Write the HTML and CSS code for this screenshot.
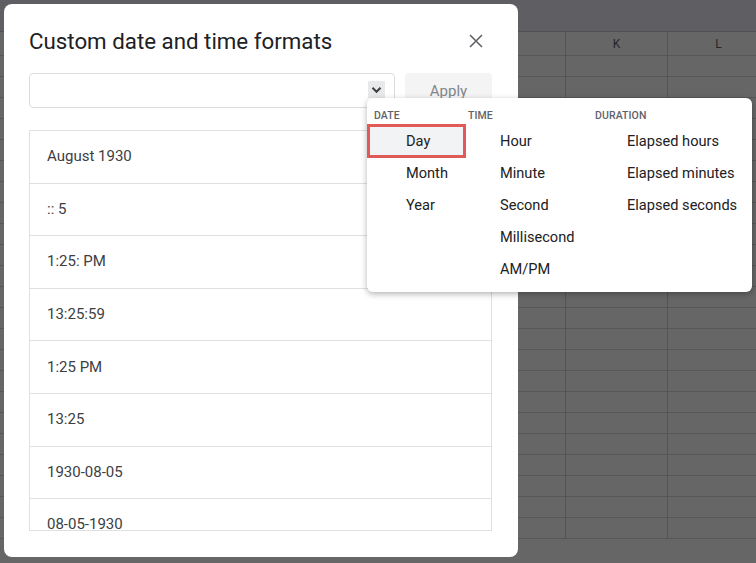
FILE: index.html
```html
<!DOCTYPE html>
<html>
<head>
<meta charset="utf-8">
<link rel="stylesheet" href="styles.css">
</head>
<body>
<div class="sheet">
  <div class="topbar"></div>
  <div class="grid">
    <div class="hcell"></div><div class="hcell">J</div><div class="hcell">K</div><div class="hcell">L</div>
    <div class="cell"></div><div class="cell"></div><div class="cell"></div><div class="cell"></div>
    <div class="cell"></div><div class="cell"></div><div class="cell"></div><div class="cell"></div>
    <div class="cell"></div><div class="cell"></div><div class="cell"></div><div class="cell"></div>
    <div class="cell"></div><div class="cell"></div><div class="cell"></div><div class="cell"></div>
    <div class="cell"></div><div class="cell"></div><div class="cell"></div><div class="cell"></div>
    <div class="cell"></div><div class="cell"></div><div class="cell"></div><div class="cell"></div>
    <div class="cell"></div><div class="cell"></div><div class="cell"></div><div class="cell"></div>
    <div class="cell"></div><div class="cell"></div><div class="cell"></div><div class="cell"></div>
    <div class="cell"></div><div class="cell"></div><div class="cell"></div><div class="cell"></div>
    <div class="cell"></div><div class="cell"></div><div class="cell"></div><div class="cell"></div>
    <div class="cell"></div><div class="cell"></div><div class="cell"></div><div class="cell"></div>
    <div class="cell"></div><div class="cell"></div><div class="cell"></div><div class="cell"></div>
    <div class="cell"></div><div class="cell"></div><div class="cell"></div><div class="cell"></div>
    <div class="cell"></div><div class="cell"></div><div class="cell"></div><div class="cell"></div>
    <div class="cell"></div><div class="cell"></div><div class="cell"></div><div class="cell"></div>
    <div class="cell"></div><div class="cell"></div><div class="cell"></div><div class="cell"></div>
    <div class="cell"></div><div class="cell"></div><div class="cell"></div><div class="cell"></div>
    <div class="cell"></div><div class="cell"></div><div class="cell"></div><div class="cell"></div>
    <div class="cell"></div><div class="cell"></div><div class="cell"></div><div class="cell"></div>
    <div class="cell"></div><div class="cell"></div><div class="cell"></div><div class="cell"></div>
    <div class="cell"></div><div class="cell"></div><div class="cell"></div><div class="cell"></div>
    <div class="cell"></div><div class="cell"></div><div class="cell"></div><div class="cell"></div>
    <div class="cell"></div><div class="cell"></div><div class="cell"></div><div class="cell"></div>
  </div>
</div>

<div class="dialog">
  <div class="title-row">
    <h1 class="title">Custom date and time formats</h1>
    <button class="close" aria-label="Close">
      <svg width="14" height="14" viewBox="0 0 14 14"><path d="M1 1L13 13M13 1L1 13" stroke="#5f6368" stroke-width="1.6" fill="none"/></svg>
    </button>
  </div>
  <div class="input-row">
    <div class="input">
      <span class="chev">
        <svg width="11" height="8" viewBox="0 0 11 8"><path d="M1.5 1.8L5.5 5.8L9.5 1.8" stroke="#3c4043" stroke-width="2" fill="none"/></svg>
      </span>
    </div>
    <button class="apply">Apply</button>
  </div>
  <div class="list">
    <div class="item">August 1930</div>
    <div class="item">:: 5</div>
    <div class="item">1:25: PM</div>
    <div class="item">13:25:59</div>
    <div class="item">1:25 PM</div>
    <div class="item">13:25</div>
    <div class="item">1930-08-05</div>
    <div class="item">08-05-1930</div>
  </div>
</div>

<div class="menu">
  <div class="mcol c1">
    <div class="mhead">Date</div>
    <div class="mitem selected">Day</div>
    <div class="mitem">Month</div>
    <div class="mitem">Year</div>
  </div>
  <div class="mcol c2">
    <div class="mhead">Time</div>
    <div class="mitem">Hour</div>
    <div class="mitem">Minute</div>
    <div class="mitem">Second</div>
    <div class="mitem">Millisecond</div>
    <div class="mitem">AM/PM</div>
  </div>
  <div class="mcol c3">
    <div class="mhead">Duration</div>
    <div class="mitem">Elapsed hours</div>
    <div class="mitem">Elapsed minutes</div>
    <div class="mitem">Elapsed seconds</div>
  </div>
</div>
</body>
</html>
```

FILE: styles.css
```css
html, body {
  margin: 0;
  padding: 0;
  width: 756px;
  height: 563px;
  overflow: hidden;
  font-family: Roboto, "Liberation Sans", Arial, sans-serif;
  background: #666666;
}

.sheet {
  width: 756px;
  height: 563px;
  display: flex;
  flex-direction: column;
  overflow: hidden;
}

.topbar {
  height: 32px;
  flex: none;
  background: #5f5f63;
  border-bottom: 1px solid #525252;
  box-sizing: border-box;
}

.grid {
  display: grid;
  grid-template-columns: 464px 102px 102px 102px;
  grid-auto-rows: 21px;
  grid-template-rows: 24px;
}

.hcell, .cell {
  box-sizing: border-box;
  border-right: 1px solid #545454;
  border-bottom: 1px solid #575757;
  background: #666666;
}

.hcell {
  font-size: 12px;
  color: #262626;
  display: flex;
  align-items: center;
  justify-content: center;
}

.dialog {
  position: absolute;
  left: 4px;
  top: 4px;
  width: 514px;
  height: 553px;
  box-sizing: border-box;
  background: #ffffff;
  border-radius: 8px;
  padding: 23px 26px 0 25px;
  display: flex;
  flex-direction: column;
}

.title-row {
  display: flex;
  align-items: center;
  justify-content: space-between;
  height: 28px;
}

.title {
  margin: 0;
  font-size: 22.3px;
  font-weight: 400;
  color: #202124;
  line-height: 28px;
}

.close {
  width: 24px;
  height: 24px;
  margin-right: 4px;
  padding: 0;
  border: none;
  background: transparent;
  display: flex;
  align-items: center;
  justify-content: center;
}

.input-row {
  display: flex;
  margin-top: 18px;
  height: 35px;
  gap: 10px;
}

.input {
  width: 366px;
  box-sizing: border-box;
  border: 1px solid #dadce0;
  border-radius: 4px;
  display: flex;
  align-items: center;
  justify-content: flex-end;
  padding-right: 9px;
}

.chev {
  width: 17px;
  height: 17px;
  background: #e8e9eb;
  display: flex;
  align-items: center;
  justify-content: center;
  margin-top: -2px;
}

.apply {
  width: 87px;
  border: none;
  border-radius: 4px;
  background: #f4f4f5;
  color: #80868b;
  font-family: Roboto, "Liberation Sans", Arial, sans-serif;
  font-size: 15px;
  padding: 0;
}

.list {
  margin-top: 22px;
  height: 401px;
  box-sizing: border-box;
  border: 1px solid #e0e0e0;
  overflow: hidden;
}

.item {
  height: 52.6px;
  box-sizing: border-box;
  border-bottom: 1px solid #e0e0e0;
  display: flex;
  align-items: center;
  padding-left: 17px;
  padding-bottom: 1px;
  font-size: 15px;
  color: #3c4043;
}

.menu {
  position: absolute;
  left: 367px;
  top: 98px;
  width: 385px;
  height: 194px;
  box-sizing: border-box;
  background: #ffffff;
  border-radius: 6px;
  box-shadow: 0 2px 6px rgba(0,0,0,0.3);
  padding-top: 10px;
  display: grid;
  grid-template-columns: 94px 127px 1fr;
}

.mhead {
  height: 16px;
  line-height: 16px;
  margin-bottom: 1px;
  padding-left: 7px;
  font-size: 10.5px;
  font-weight: 500;
  text-transform: uppercase;
  color: #5f6368;
  letter-spacing: 0.1px;
}

.mitem {
  height: 32px;
  display: flex;
  align-items: center;
  padding-left: 39px;
  font-size: 14.6px;
  color: #202124;
  white-space: nowrap;
}

.mitem.selected {
  box-sizing: border-box;
  width: 99px;
  height: 34px;
  margin: -1px 0;
  padding-left: 36px;
  border: 3px solid #e05a57;
  background: #f1f3f4;
}
```
